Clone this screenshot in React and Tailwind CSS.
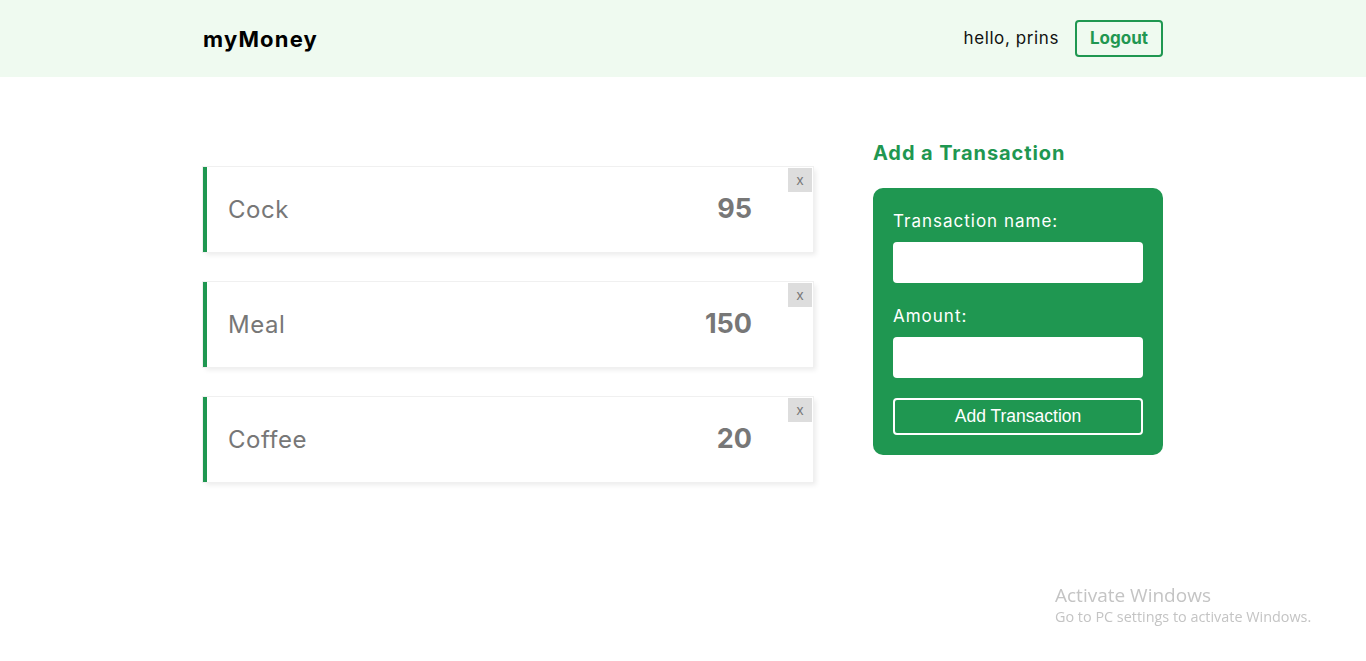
import React from 'react';

const transactions = [
  { id: 1, name: 'Cock', amount: 95 },
  { id: 2, name: 'Meal', amount: 150 },
  { id: 3, name: 'Coffee', amount: 20 },
];

const font = "font-['Inter','Noto_Sans',sans-serif]";

const Navbar = () => (
  <nav className="bg-[#effaf0] h-[77px]">
    <div className="w-[960px] mx-auto h-full flex items-center">
      <p className="text-[22px] font-bold tracking-[1.2px] text-black flex-1 pt-[1px]">myMoney</p>
      <p className="text-[17px] tracking-[0.6px] text-[#111] mr-4">hello, prins</p>
      <button className="w-[88px] h-[37px] border-2 border-[#1f9751] rounded-[4px] text-[#1f9751] font-bold text-[17px] leading-none">
        Logout
      </button>
    </div>
  </nav>
);

const TransactionItem = ({ name, amount }) => (
  <li className="relative h-[85px] mb-[30px] bg-white border-l-4 border-[#1f9751] shadow-[3px_3px_5px_rgba(0,0,0,0.08)] outline outline-1 outline-[#f0f0f0] flex items-center pl-[21px] pr-[61px]">
    <p className="flex-1 text-[24px] tracking-[0.5px] text-[#777]">{name}</p>
    <p className="text-[27px] font-bold text-[#777]">{amount}</p>
    <button className="absolute top-[1px] right-[1px] w-[24px] h-[24px] bg-[#ddd] text-[#777] text-[14px] leading-none font-['Liberation_Sans',sans-serif]">
      x
    </button>
  </li>
);

const TransactionForm = () => (
  <div>
    <h3 className="text-[#1f9751] text-[20px] font-bold tracking-[0.9px] mt-[66px] leading-none mb-[25px]">Add a Transaction</h3>
    <form className="bg-[#1f9751] rounded-[10px] p-5 pt-[25px]">
      <label className="block">
        <span className="block text-white text-[17px] tracking-[1px] leading-none mb-[12px]">Transaction name:</span>
        <input type="text" className="block w-full h-[41px] bg-white rounded-[4px]" />
      </label>
      <label className="block mt-[25px]">
        <span className="block text-white text-[17px] tracking-[1px] leading-none mb-[12px]">Amount:</span>
        <input type="number" className="block w-full h-[41px] bg-white rounded-[4px]" />
      </label>
      <button type="button" className="block w-full h-[37px] mt-5 border-2 border-white rounded-[4px] text-white text-[17.5px] font-['Liberation_Sans',sans-serif]">
        Add Transaction
      </button>
    </form>
  </div>
);

export default function App() {
  return (
    <div className={`${font} min-h-[661px] bg-white relative`}>
      <Navbar />
      <div className="w-[960px] mx-auto flex gap-[60px]">
        <ul className="w-[610px] mt-[90px]">
          {transactions.map(t => (
            <TransactionItem key={t.id} name={t.name} amount={t.amount} />
          ))}
        </ul>
        <div className="w-[290px]">
          <TransactionForm />
        </div>
      </div>
      <div className="fixed left-[1055px] top-[583px] text-[#c4c4c4] font-['Open_Sans',sans-serif] pointer-events-none">
        <p className="text-[19px] leading-[24px]">Activate Windows</p>
        <p className="text-[14.4px] leading-[20px]">Go to PC settings to activate Windows.</p>
      </div>
    </div>
  );
}
